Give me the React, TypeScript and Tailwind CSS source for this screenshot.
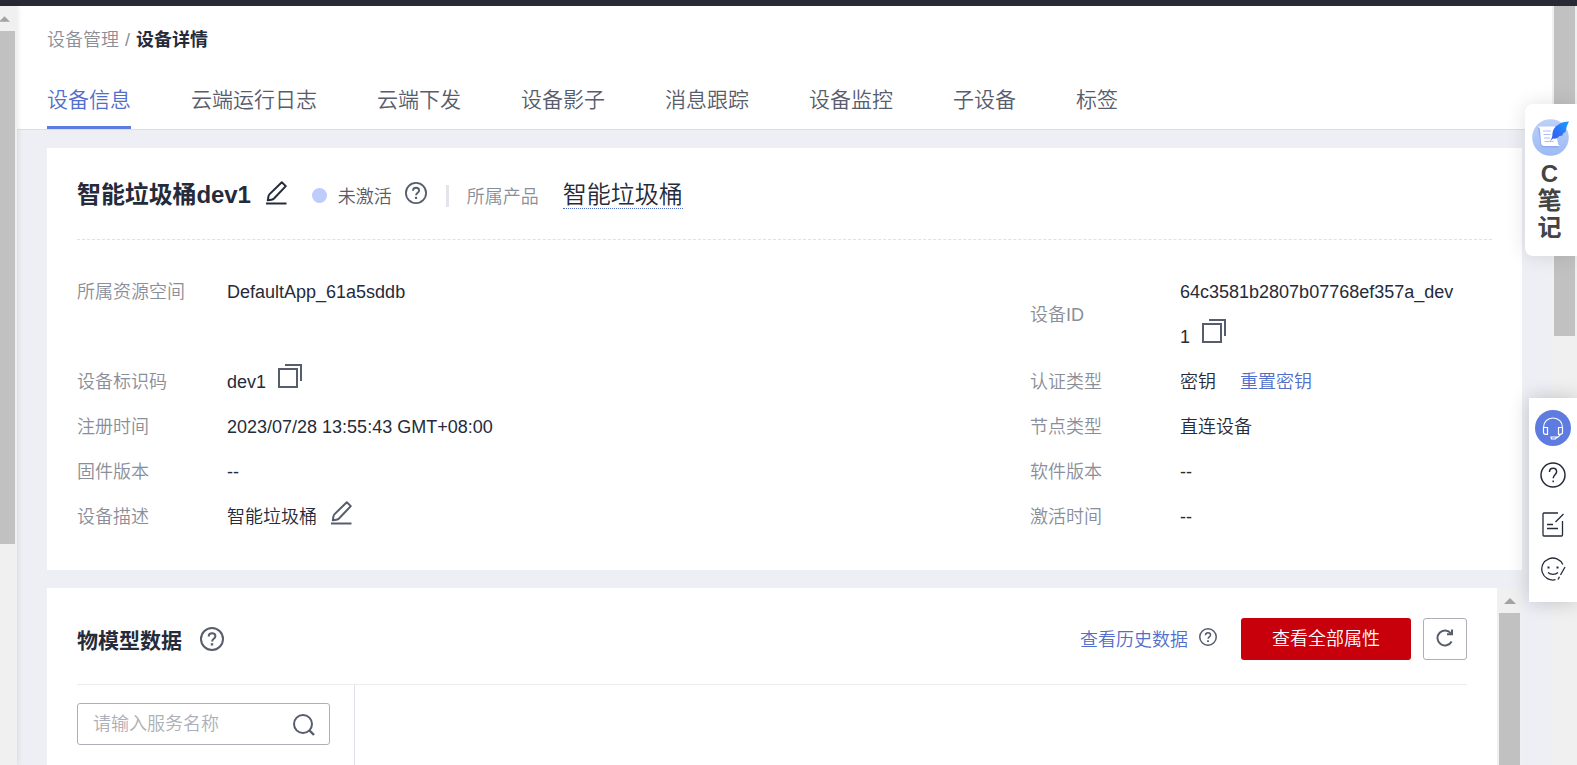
import { useState } from 'react';
import type { ReactNode } from 'react';

const tabs = ['设备信息', '云端运行日志', '云端下发', '设备影子', '消息跟踪', '设备监控', '子设备', '标签'];

function HelpIcon({ className }: { className: string }) {
  return (
    <svg viewBox="0 0 24 24" fill="none" stroke="currentColor" strokeWidth="2" className={className}>
      <circle cx="12" cy="12" r="11" />
      <path d="M8.700 9.600c0-2 1.400-3.300 3.400-3.300s3.300 1.200 3.300 3c0 2.400-3.300 2.600-3.300 5.100" />
      <path d="M12 16.200v2.300" strokeWidth="2.400" />
    </svg>
  );
}

function EditIcon({ className }: { className: string }) {
  return (
    <svg viewBox="0 0 22 24" fill="none" stroke="currentColor" strokeWidth="2" className={className}>
      <path d="M16.800 1.200l4 3.900L9 17.500q-1 1-2.500 1.200l-3.700.6.600-3.700q.2-1.500 1.200-2.500z" strokeLinejoin="round" />
      <path d="M1 22.500h20.500" />
    </svg>
  );
}

function CopyIcon({ className }: { className: string }) {
  return (
    <svg viewBox="0 0 24 24" fill="none" stroke="currentColor" strokeWidth="2" className={className}>
      <path d="M1 5h18v18H1z" />
      <path d="M7 1h16v16" />
    </svg>
  );
}

function ScrollArrow({ className }: { className: string }) {
  return (
    <svg viewBox="0 0 12 6" className={className}>
      <path d="M0 6L6 0l6 6z" fill="#a3a3a3" />
    </svg>
  );
}

function Field({ label, middle, children }: { label: string; middle?: boolean; children: ReactNode }) {
  return (
    <div className={`flex leading-[45px] ${middle ? 'items-center' : 'items-start'}`}>
      <div className="w-[150px] shrink-0 text-[#8a8e99]">{label}</div>
      <div className="text-[#252b3a]">{children}</div>
    </div>
  );
}

function NoteWidget() {
  return (
    <div className="absolute top-[104px] right-0 flex h-[152px] w-[52px] flex-col items-center rounded-l-lg bg-white pt-[14px] pr-[3px] text-[24px] leading-[27px] font-bold text-[#444] shadow-[0_0_20px_rgba(0,0,0,0.12)]">
      <svg viewBox="0 0 38 38" className="mb-1 ml-[2px] h-[38px] w-[38px] shrink-0">
        <defs>
          <linearGradient id="disc" x1="0" y1="0" x2="0" y2="1">
            <stop offset="0" stopColor="#bdd0f9" />
            <stop offset="1" stopColor="#9dbaf4" />
          </linearGradient>
          <linearGradient id="feather" x1="1" y1="0" x2="0" y2="1">
            <stop offset="0" stopColor="#1b9dff" />
            <stop offset="1" stopColor="#3b50f0" />
          </linearGradient>
        </defs>
        <circle cx="18.500" cy="19.500" r="18.300" fill="url(#disc)" />
        <path d="M6 10h14l5 17 2 2.500H12c-2 0-3-1-3.300-3z" fill="#7d9be6" opacity=".6" />
        <path d="M6.500 8.500H23l3 17.500 1.500 2H12c-2 0-2.500-1-2.800-2.500L8 12q-.3-2.500-1.500-3.500z" fill="#fff" />
        <path d="M11 13h8M11.500 16.500h7M12 20h6M12.500 23.500h9" stroke="#a8c0f5" strokeWidth="1" />
        <path d="M37 3.500C29 3.500 21.500 8 20.500 15c-.2 3 0 4.500-2.500 8l3-2.500c2.500.5 5-.5 6.500-2.500l3-.5c0-1 .3-1.500 1-2.500l2-1c.5-3.500 1.500-7 3.500-10.500z" fill="url(#feather)" />
      </svg>
      <span>C</span>
      <span>笔</span>
      <span>记</span>
    </div>
  );
}

function SupportWidget() {
  return (
    <div className="absolute top-[398px] right-0 flex h-[204px] w-12 flex-col items-center bg-white pt-3 text-[#252b3a] shadow-[0_0_20px_rgba(0,0,0,0.2)]">
      <div className="flex h-9 w-9 items-center justify-center rounded-full bg-[#5e7ce0]">
        <svg viewBox="0 0 22 23" fill="none" stroke="#fff" strokeWidth="1.200" className="h-[23px] w-[22px]">
          <path d="M1.500 10.500C1.500 5 5.500 1 11 1s9.500 4 9.500 9.500" />
          <path d="M1.500 10.500h4v7q-4 0-4-2zM20.500 10.500h-4v7q4 0 4-2z" />
          <path d="M18.500 17.500q-1.500 2-4 3.500" />
          <path d="M9 20h5.500l-1 2H9.500z" />
        </svg>
      </div>
      <svg viewBox="0 0 26 26" fill="none" stroke="currentColor" strokeWidth="1.500" className="mt-4 h-[26px] w-[26px]">
        <circle cx="13" cy="13" r="12" />
        <path d="M9.500 10c0-2.200 1.400-3.700 3.600-3.700s3.500 1.400 3.500 3.500c0 2.700-3.400 3.200-3.400 6.400" />
        <path d="M13.200 18.500v1.800" />
      </svg>
      <svg viewBox="0 0 22 25" fill="none" stroke="currentColor" strokeWidth="1.300" className="mt-6 h-[25px] w-[22px]">
        <path d="M16 1H2Q1 1 1 2v21q0 1 1 1h17.500q1 0 1-1V9" />
        <path d="M21.500 2l-8 8M5 12.500h6M5 16.500h11" />
      </svg>
      <svg viewBox="0 0 25 24" fill="none" stroke="currentColor" strokeWidth="1.300" className="mt-5 h-6 w-[25px]">
        <path d="M21.800 7.500A11 11 0 1 0 14.500 22.700" />
        <path d="M7 15.500c2.500 2.500 7.500 2.500 10 0M24 10l-4.500 8M18.500 19.800l-1.500 2.700" />
        <path d="M6.500 10.500h2M15.500 10.500h2" strokeWidth="2" />
      </svg>
    </div>
  );
}

export default function App() {
  const [activeTab, setActiveTab] = useState('设备信息');
  const [keyword, setKeyword] = useState('');

  return (
    <div className="relative flex h-[765px] w-full flex-col overflow-hidden bg-[#eeeff5] font-['Liberation_Sans','Noto_Sans_CJK_SC',sans-serif] text-[18px] font-[350]">
      <div className="h-[6px] shrink-0 bg-[#282b33]" />

      <div className="flex min-h-0 flex-1">
        <div className="z-10 w-[17px] shrink-0 bg-[#f0f0f0] shadow-[0_0_6px_rgba(0,0,0,0.12)]">
          <ScrollArrow className="-ml-[1px] mt-[10px] h-[6px] w-[11px]" />
          <div className="mt-[9px] h-[513px] w-[15px] bg-[#c1c1c1]" />
        </div>

        <div className="flex min-w-0 flex-1 flex-col">
          <header className="h-[124px] shrink-0 border-b border-[#dcdee5] bg-white pl-[30px]">
            <div className="flex h-[67px] items-center pt-[2px] text-[#8a8e99]">
              <span>设备管理</span>
              <span className="mx-[6px]">/</span>
              <span className="font-bold text-[#252b3a]">设备详情</span>
            </div>
            <nav className="flex h-[56px] gap-[60px] text-[21px]">
              {tabs.map((tab) => (
                <button
                  key={tab}
                  onClick={() => setActiveTab(tab)}
                  className={`h-[56px] border-b-[3px] pt-[1px] ${
                    tab === activeTab ? 'border-[#5e7ce0] text-[#526ecc]' : 'border-transparent text-[#575d6c]'
                  }`}
                >
                  {tab}
                </button>
              ))}
            </nav>
          </header>

          <main className="flex min-h-0 flex-1 flex-col gap-[18px] pt-[18px] pr-[30px] pl-[30px]">
            <section className="h-[422px] shrink-0 bg-white px-[30px]">
              <div className="flex h-[92px] items-center border-b border-dashed border-[#dfe1e6] pt-[3px] text-[#575d6c]">
                <h1 className="text-[24px] font-bold tracking-[-0.1px] text-[#252b3a]">智能垃圾桶dev1</h1>
                <EditIcon className="ml-[14px] mb-[5px] h-6 w-[22px] text-[#252b3a]" />
                <span className="ml-[25px] h-[15px] w-[15px] rounded-full bg-[#beccfa]" />
                <span className="mt-[4px] ml-[11px]">未激活</span>
                <HelpIcon className="ml-[13px] mb-[5px] h-[22px] w-[22px]" />
                <span className="mt-[2px] ml-[19px] h-[22px] w-[3px] bg-[#e3e4ec]" />
                <span className="mt-[5px] ml-[18px] text-[#8a8e99]">所属产品</span>
                <a className="ml-6 border-b border-dotted border-[#526ecc] text-[24px] leading-[27px] text-[#252b3a]">智能垃圾桶</a>
              </div>
              <div className="mt-[30px] flex">
                <div className="w-[953px]">
                  <div className="h-[90px]">
                    <Field label="所属资源空间">DefaultApp_61a5sddb</Field>
                  </div>
                  <Field label="设备标识码">
                    <div className="flex h-[45px]">
                      dev1
                      <CopyIcon className="mt-1 ml-3 h-6 w-6 text-[#575d6c]" />
                    </div>
                  </Field>
                  <Field label="注册时间">2023/07/28 13:55:43 GMT+08:00</Field>
                  <Field label="固件版本">--</Field>
                  <Field label="设备描述">
                    <div className="flex h-[45px]">
                      智能垃圾桶
                      <EditIcon className="mt-[6px] ml-[13px] h-6 w-[22px] text-[#575d6c]" />
                    </div>
                  </Field>
                </div>
                <div className="flex-1">
                  <Field label="设备ID" middle>
                    <div>64c3581b2807b07768ef357a_dev</div>
                    <div className="flex h-[45px]">
                      1
                      <CopyIcon className="mt-1 ml-3 h-6 w-6 text-[#575d6c]" />
                    </div>
                  </Field>
                  <Field label="认证类型">
                    密钥<a className="ml-6 text-[#526ecc]">重置密钥</a>
                  </Field>
                  <Field label="节点类型">直连设备</Field>
                  <Field label="软件版本">--</Field>
                  <Field label="激活时间">--</Field>
                </div>
              </div>
            </section>

            <section className="flex min-h-0 flex-1 bg-white">
              <div className="flex flex-1 flex-col px-[30px]">
                <div className="flex h-[97px] shrink-0 items-center border-b border-[#ebecf0] pt-[6px]">
                  <h2 className="pt-[3px] text-[21px] font-bold text-[#252b3a]">物模型数据</h2>
                  <HelpIcon className="ml-[18px] h-6 w-6 text-[#575d6c]" />
                  <a className="ml-auto pt-[2px] text-[#526ecc]">查看历史数据</a>
                  <HelpIcon className="ml-[11px] mb-[4px] h-[18px] w-[18px] text-[#575d6c]" />
                  <button className="ml-6 h-[42px] w-[170px] rounded-[3px] bg-[#c7000b] text-white">查看全部属性</button>
                  <button className="ml-3 flex h-[42px] w-11 items-center justify-center rounded-[3px] border border-[#adb0b8] text-[#575d6c]">
                    <svg viewBox="0 0 18 18" fill="none" stroke="currentColor" strokeWidth="2" className="mb-[2px] h-[18px] w-[18px]">
                      <path d="M15.600 12.500A7.500 7.500 0 1 1 15 4.500" />
                      <path d="M16 .5v4.700h-5" />
                    </svg>
                  </button>
                </div>
                <div className="w-[278px] flex-1 border-r border-[#dfe1e6] pt-[18px]">
                  <div className="flex h-[42px] w-[253px] items-center rounded-[3px] border border-[#adb0b8] pr-[15px] pl-[15px]">
                    <input
                      value={keyword}
                      onChange={(e) => setKeyword(e.target.value)}
                      placeholder="请输入服务名称"
                      className="w-[200px] outline-none placeholder:text-[#adb0b8]"
                    />
                    <svg viewBox="0 0 22 22" fill="none" stroke="#575d6c" strokeWidth="2" className="mt-[2px] h-[22px] w-[22px] shrink-0">
                      <circle cx="10" cy="10" r="9" />
                      <path d="M16 16l5 5" strokeWidth="2.400" />
                    </svg>
                  </div>
                </div>
              </div>
              <div className="w-[25px] bg-[#f0f0f0] px-[2px] pt-[10px]">
                <ScrollArrow className="mx-auto h-[6px] w-3" />
                <div className="mt-[9px] h-[160px] bg-[#c1c1c1]" />
              </div>
            </section>
          </main>
        </div>

        <div className="w-[25px] shrink-0 bg-[#f0f0f0] px-[2px]">
          <div className="h-[330px] bg-[#c1c1c1]" />
        </div>
      </div>

      <NoteWidget />
      <SupportWidget />
    </div>
  );
}
